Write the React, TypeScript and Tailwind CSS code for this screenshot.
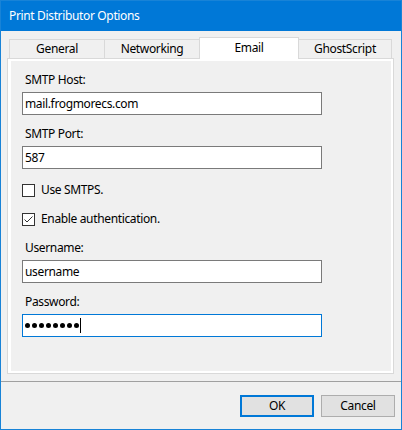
// Print Distributor Options dialog, Email tab selected.
const font = { fontFamily: '"Noto Sans", "Liberation Sans", Arial, sans-serif' };

function Tab({ label, selected, width }: { label: string; selected?: boolean; width: string }) {
  if (selected) {
    return (
      <div
        className={`relative z-10 -mb-px -ml-px flex h-[22px] items-start justify-center border-x border-t border-[#d9d9d9] bg-white pt-[2px] text-[12px] leading-[16px] text-black ${width}`}
      >
        {label}
      </div>
    );
  }
  return (
    <div
      className={`-ml-px flex h-[19px] items-start justify-center border-x border-t border-[#d9d9d9] bg-[#f0f0f0] pt-[1px] text-[12px] leading-[16px] text-black first:ml-0 ${width}`}
    >
      {label}
    </div>
  );
}

function Label({ children, className = "" }: { children: React.ReactNode; className?: string }) {
  return <div className={`pl-[14px] text-[12px] leading-[16px] text-black ${className}`}>{children}</div>;
}

function TextBox({ children, focused }: { children: React.ReactNode; focused?: boolean }) {
  return (
    <div
      className={`ml-[11px] mt-[4px] flex h-[23px] w-[300px] items-center border bg-white pl-[2px] text-[12px] text-black ${
        focused ? "border-[#0078d7]" : "border-[#7a7a7a]"
      }`}
    >
      {children}
    </div>
  );
}

function CheckRow({ label, checked, className = "" }: { label: string; checked?: boolean; className?: string }) {
  return (
    <div className={`ml-[11px] flex h-[16px] items-center ${className}`}>
      <div className="flex h-[13px] w-[13px] items-center justify-center border border-[#333333] bg-white">
        {checked && (
          <svg width="11" height="11" viewBox="0 0 11 11">
            <path d="M1.5 5.5 L4 8 L9.5 2.5" fill="none" stroke="#333333" strokeWidth="1" />
          </svg>
        )}
      </div>
      <span className="ml-[6px] text-[12px] leading-[16px] text-black">{label}</span>
    </div>
  );
}

export default function App() {
  return (
    <div
      style={font}
      className="flex h-[430px] w-[402px] flex-col border border-[#1883d7] bg-[#f0f0f0] tracking-[-0.35px]"
    >
      <div className="flex h-[30px] items-center bg-[#0078d7] pl-[8px] text-[12px] text-white">
        Print Distributor Options
      </div>

      <div className="mt-[6px] flex items-end pl-[8px]">
        <Tab label="General" width="w-[96px]" />
        <Tab label="Networking" width="w-[96px]" />
        <Tab label="Email" selected width="w-[100px]" />
        <Tab label="GhostScript" width="w-[94px]" />
      </div>

      <div className="ml-[6px] h-[316px] w-[387px] border border-[#d9d9d9] bg-white pb-[2px] pl-[3px] pr-[2px] pt-[2px]">
        <div className="h-full bg-[#f0f0f0] pt-[11px]">
          <Label>SMTP Host:</Label>
          <TextBox>mail.frogmorecs.com</TextBox>
          <Label className="mt-[11px]">SMTP Port:</Label>
          <TextBox>587</TextBox>
          <CheckRow label="Use SMTPS." className="mt-[13px]" />
          <CheckRow label="Enable authentication." checked className="mt-[13px]" />
          <Label className="mt-[13px]">Username:</Label>
          <TextBox>username</TextBox>
          <Label className="mt-[11px]">Password:</Label>
          <TextBox focused>
            <div className="flex items-center gap-[2px]">
              {Array.from({ length: 8 }).map((_, i) => (
                <div key={i} className="h-[5px] w-[5px] rounded-full bg-black" />
              ))}
            </div>
            <div className="ml-[1px] h-[15px] w-px bg-black" />
          </TextBox>
        </div>
      </div>

      <div className="mt-[7px] h-px bg-[#a0a0a0]" />

      <div className="mt-[13px] flex justify-end gap-[7px] pr-[6px]">
        <button className="h-[22px] w-[74px] border-2 border-[#0078d7] bg-[#e1e1e1] text-[12px] text-black">
          OK
        </button>
        <button className="h-[22px] w-[74px] border border-[#adadad] bg-[#e1e1e1] text-[12px] text-black">
          Cancel
        </button>
      </div>
    </div>
  );
}
